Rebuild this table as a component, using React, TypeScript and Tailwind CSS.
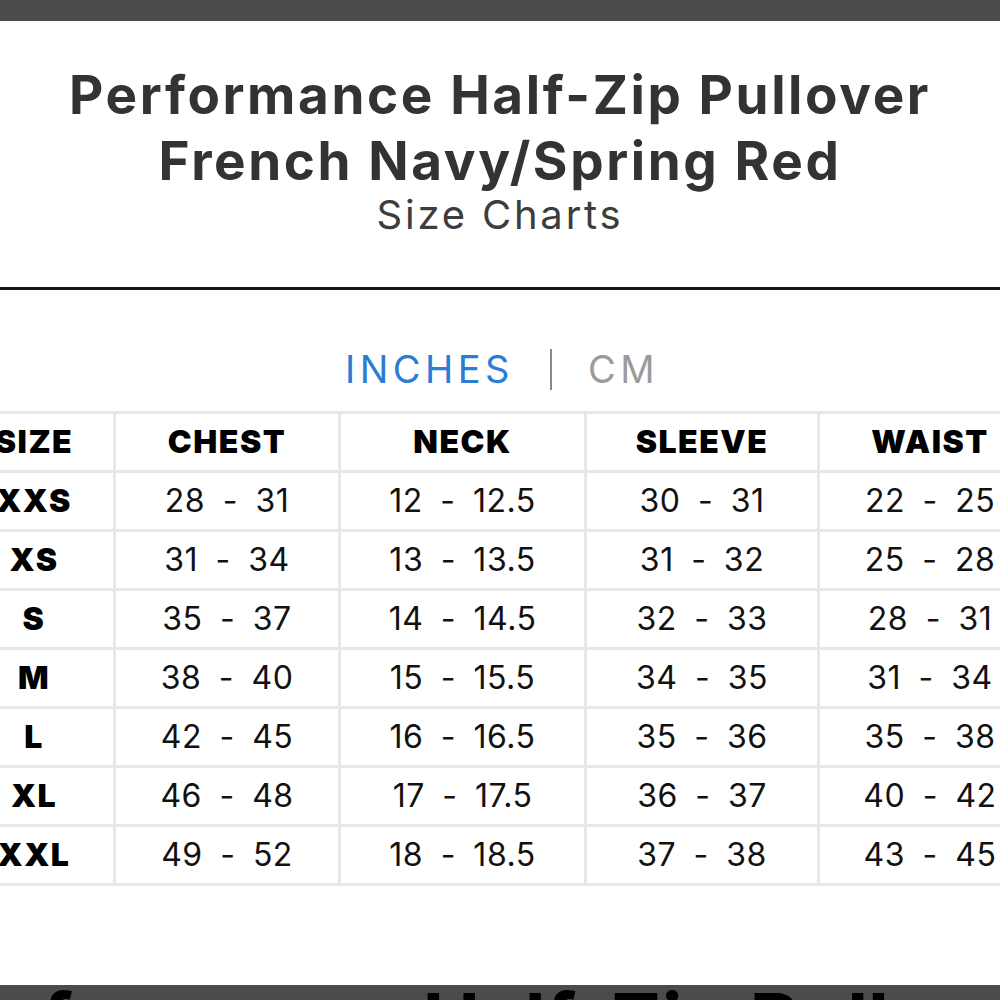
import React from "react";

const headers = ["SIZE", "CHEST", "NECK", "SLEEVE", "WAIST"];
const rows: string[][] = [
  ["XXS", "28 - 31", "12 - 12.5", "30 - 31", "22 - 25"],
  ["XS", "31 - 34", "13 - 13.5", "31 - 32", "25 - 28"],
  ["S", "35 - 37", "14 - 14.5", "32 - 33", "28 - 31"],
  ["M", "38 - 40", "15 - 15.5", "34 - 35", "31 - 34"],
  ["L", "42 - 45", "16 - 16.5", "35 - 36", "35 - 38"],
  ["XL", "46 - 48", "17 - 17.5", "36 - 37", "40 - 42"],
  ["XXL", "49 - 52", "18 - 18.5", "37 - 38", "43 - 45"],
];

export default function App() {
  return (
    <div
      className="w-[1000px] h-[1000px] bg-white overflow-hidden flex flex-col"
      style={{ fontFamily: "Inter, 'Liberation Sans', sans-serif" }}
    >
      <div className="h-[21px] bg-[#4b4b4b] shrink-0" />
      <div className="flex flex-col items-center text-[#333333] pt-[41px]">
        <div className="text-[53px] font-bold leading-[66px] text-center tracking-[2.6px] whitespace-nowrap">
          Performance Half-Zip Pullover
        </div>
        <div className="text-[53px] font-bold leading-[66px] text-center tracking-[2.6px] whitespace-nowrap">
          French Navy/Spring Red
        </div>
        <div className="text-[40px] font-normal leading-[48px] text-[#3d3d3d] tracking-[2.8px] mt-[-3px]">
          Size Charts
        </div>
      </div>
      <div className="h-[3px] bg-[#141414] mt-[48px] shrink-0" />
      <div className="flex items-center justify-center mt-[57px] h-[44px] gap-[36px] pl-[4px]">
        <span className="text-[38px] tracking-[4.5px] text-[#2b7dd4] leading-none">INCHES</span>
        <span className="w-[2px] h-[41px] bg-[#8a8a8a]" />
        <span className="text-[38px] tracking-[4.5px] text-[#9b9b9b] leading-none">CM</span>
      </div>
      <div className="mt-[20px] ml-[-48px] w-[1100px] bg-[#e7e7e9] p-[3px] grid grid-cols-[158px_222px_243px_230px_220px] gap-[3px]">
        {headers.map((h) => (
          <div
            key={h}
            className="bg-white h-[56px] flex items-center justify-center text-[32px] font-black tracking-[1.5px] text-black"
          >
            {h}
          </div>
        ))}
        {rows.map((r) =>
          r.map((c, i) => (
            <div
              key={r[0] + i}
              className={
                i === 0
                  ? "bg-white h-[56px] flex items-center justify-center text-[32px] font-black tracking-[1.5px] text-black"
                  : "bg-white h-[56px] flex items-center justify-center text-[32px] font-normal text-[#111111] [word-spacing:8px] tracking-[0.5px]"
              }
            >
              {c}
            </div>
          ))
        )}
      </div>
      <div className="flex-1" />
      <div className="h-[15px] bg-[#4b4b4b] shrink-0 overflow-hidden flex justify-start">
        <div className="text-[77px] font-bold text-black leading-none whitespace-nowrap mt-[-2px] ml-[-86px]">
          Performance Half-Zip Pullover
        </div>
      </div>
    </div>
  );
}
